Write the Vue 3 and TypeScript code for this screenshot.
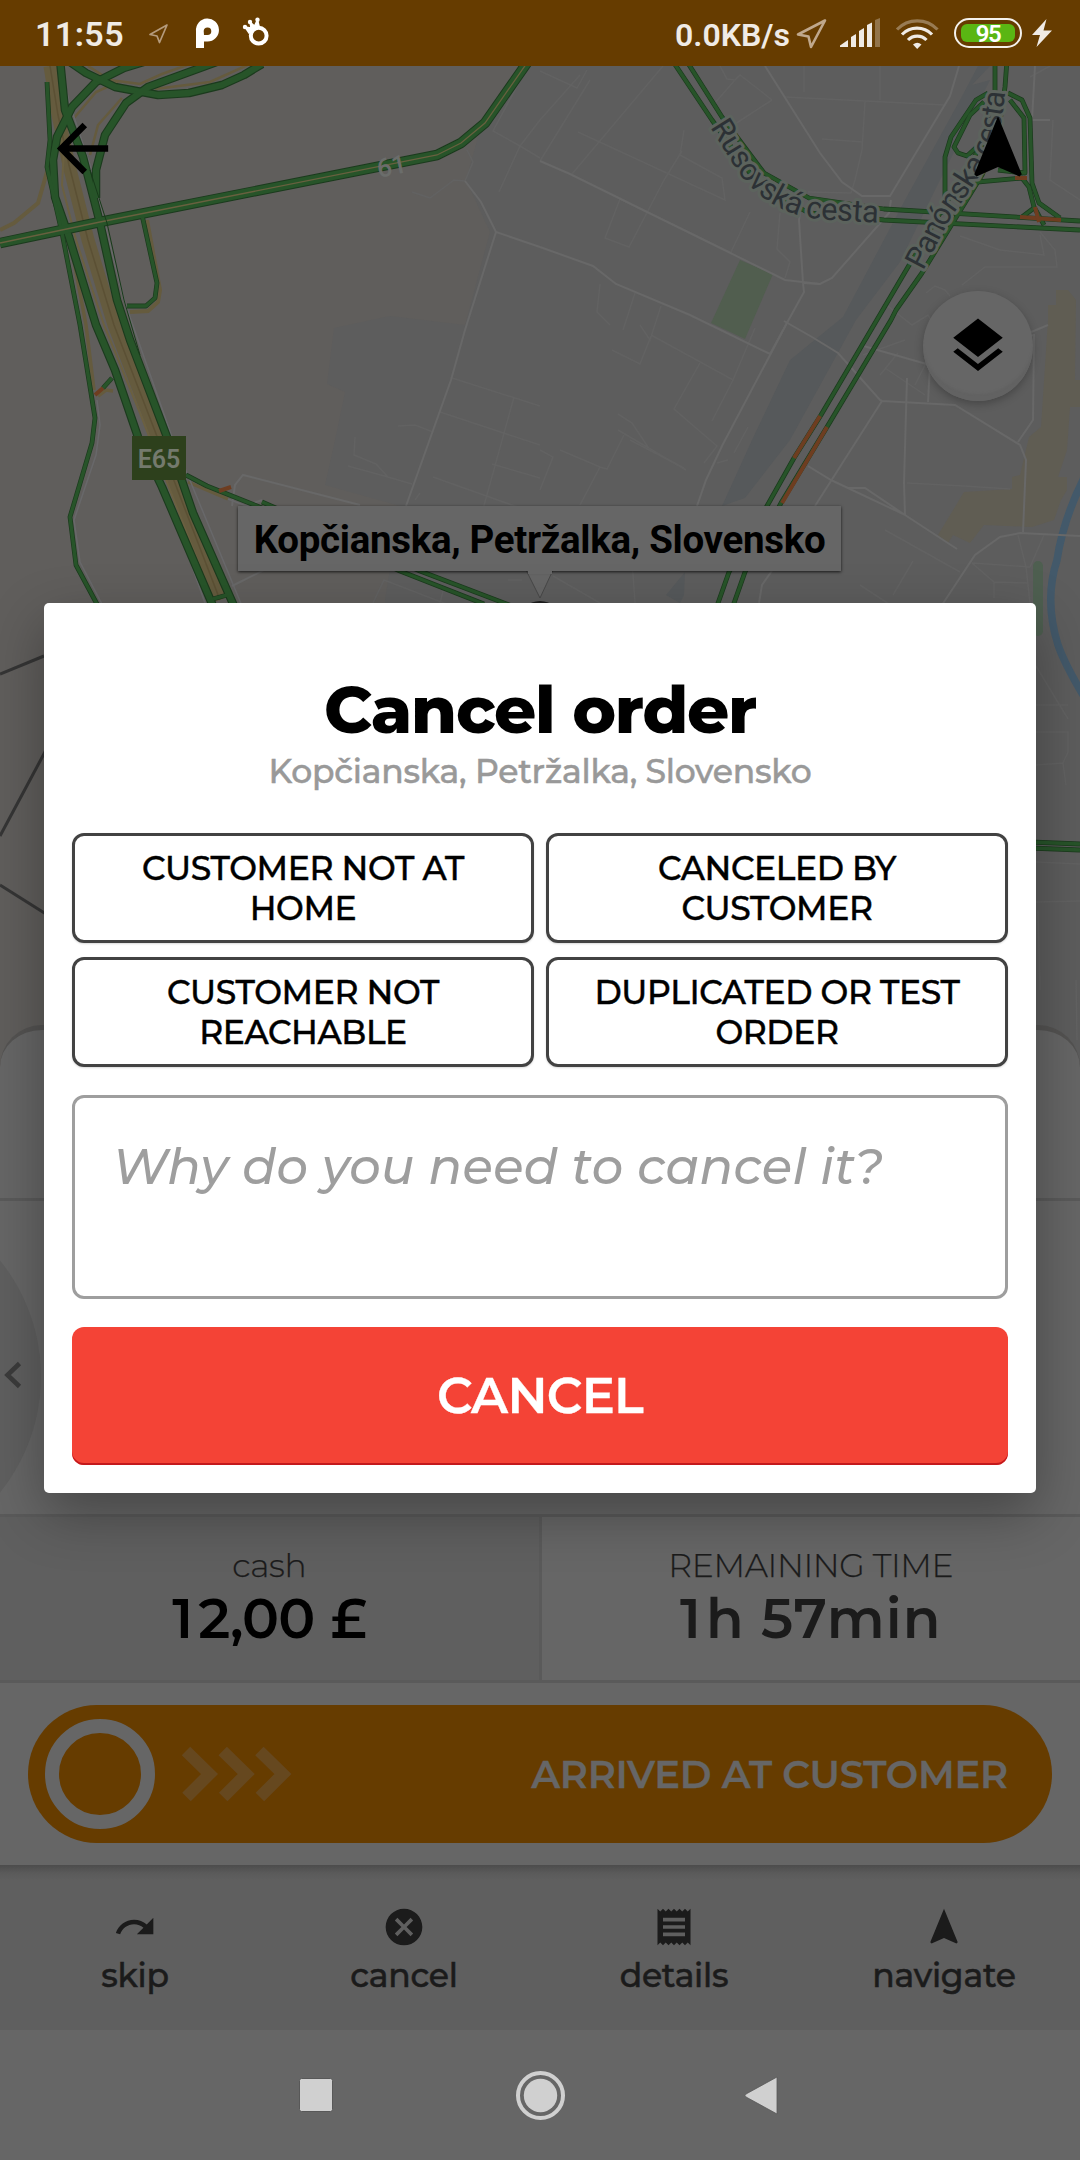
<script setup lang="ts">
interface Action { label: string; icon: string }

const reasons: string[] = [
  'CUSTOMER NOT AT HOME',
  'CANCELED BY CUSTOMER',
  'CUSTOMER NOT REACHABLE',
  'DUPLICATED OR TEST ORDER',
]

const actions: Action[] = [
  { label: 'skip', icon: 'M18.4 10.6C16.55 8.99 14.15 8 11.5 8c-4.65 0-8.58 3.03-9.96 7.22L3.9 16c1.05-3.19 4.05-5.5 7.6-5.5 1.95 0 3.73.72 5.12 1.88L13 16h9V7l-3.6 3.6z' },
  { label: 'cancel', icon: 'M12 2C6.47 2 2 6.47 2 12s4.47 10 10 10 10-4.47 10-10S17.53 2 12 2zm5 13.59L15.59 17 12 13.41 8.41 17 7 15.59 10.59 12 7 8.41 8.41 7 12 10.59 15.59 7 17 8.41 13.41 12 17 15.59z' },
  { label: 'details', icon: 'M18 17H6v-2h12v2zm0-4H6v-2h12v2zm0-4H6V7h12v2zM3 22l1.5-1.5L6 22l1.5-1.5L9 22l1.5-1.5L12 22l1.5-1.5L15 22l1.5-1.5L18 22l1.5-1.5L21 22V2l-1.5 1.5L18 2l-1.5 1.5L15 2l-1.5 1.5L12 2l-1.5 1.5L9 2 7.5 3.5 6 2 4.5 3.5 3 2v20z' },
  { label: 'navigate', icon: 'M12 2L4.5 20.29l.71.71L12 18l6.79 3 .71-.71z' },
]

// Heavily trafficked roads on the motorway side
const wideRoads: string[] = [
  'M60 60L65 110L83 157L100 223L117 300L130 340L148 387L167 437L193 513L234 606',
  'M150 60L124 68L96 82L72 107L57 137L53 160L55 197L69 237L96 325L115 370L138 437L162 487L213 606',
  'M70 62L86 73L115 87L158 95L189 93L222 85L244 75L262 64',
  'M222 60L148 87L126 103L105 135L96 170L96 198',
]

const thinRoads: string[] = [
  'M47 82L50 140L47 167L62 233L80 325L91 393L95 418L92 443L70 517L76 565L98 606',
  'M142 215L157 283L155 298L146 306L127 306',
  'M112 378L103 388',
  'M186 475L207 486L262 508L400 571L484 604',
  'M262 502L420 571L512 606',
  'M213 599L227 595',
  'M672 60L712 120L760 187L809 213L884 220L1080 230',
  'M686 60L722 117L764 173L809 198L884 209L1080 221',
  'M995 60L995 95L985 140L970 163L908 267L821 415L794 458L767 506L729 572L717 606',
  'M1007 60L1005 87L998 135L982 175L922 273L896 310L891 320L827 427L781 503L745 572L733 606',
  'M988 93L976 100L951 137L945 157L945 200',
  'M984 102L970 115L954 147L958 153L967 156L979 145',
  'M1008 93L1022 100L1030 118L1032 183L1039 203L1060 218',
  'M1010 100L1024 118L1025 173L998 170',
  'M977 182L1022 178L1029 187L1034 207L1044 225',
  'M1022 217L1034 208',
  'M1030 842L1080 844',
  'M1030 848L1080 850',
]

const jams: string[] = [
  'M95 395L103 388',
  'M219 491L231 487',
  'M1015 178L1027 178',
  'M1020 217L1061 220',
  'M1035 207L1039 222',
  'M820 416L794 458',
  'M827 427L782 503',
]

const streets: string[] = [
  'M540 247L593 266L616 284L690 315L770 354L788 321L804 292L803 283L799 220L800 212',
  'M765 66L820 153L842 182L862 196L890 196L950 96L959 66',
  'M891 200L889 213L832 278L820 284L803 283',
  'M465 181L481 202L496 232L540 247M496 232L465 330L451 380L406 506',
  'M788 321L722 446L706 480L697 506',
  'M784 321L812 337L838 353L880 400L882 401M815 506L882 401L955 405L1020 445L1026 460L1023 532',
  'M940 608L975 555L1000 537L1020 533L1080 536M759 603L762 585L790 545L815 506',
  'M848 488L865 488L905 515L957 549M808 466L831 480L905 515L904 483L907 378',
  'M540 161L570 174L700 238L785 280L820 284',
  'M985 385L1012 340L1034 335L1033 420L1018 442',
  'M928 402L930 365L860 345M1012 340L1048 325M1035 66L1032 120L1050 120',
  'M232 586L268 568M232 506L235 485L243 475L360 505M262 500L245 506',
]

const lanes: string[] = [
  'M540 71L577 88L587 70M540 120L580 75M572 174L663 66M540 161L590 80M578 132L725 200L722 178L680 155L684 130',
  'M620 199L605 238L629 247L664 180L682 151M731 252L750 212M620 199L732 253M780 213L777 249L790 262L785 278',
  'M720 66L727 79L735 80L740 75L762 92L772 100M735 80L714 104M772 100L735 124M785 97L945 105',
  'M865 102L862 150L855 180L851 193L808 192M822 139L863 142M880 66L880 100M804 66L804 92',
  'M600 284L597 312L610 325M635 293L623 330M661 306L650 340L640 325M651 335L733 380L755 328',
  'M612 350L640 364L651 336M700 363L674 409L717 446L704 463M733 380L712 421M618 414L632 423L650 450M686 470L618 430',
  'M540 450L553 457L540 490M560 450L600 467L607 469L624 435M600 467L580 505M630 440L684 468M748 427L734 453M728 460L717 463',
  'M452 378L540 406M440 412L540 445M514 397L480 520M433 477L540 515M492 464L540 478',
  'M355 437L354 455L376 464L388 477L412 484M348 466L388 477M398 426L415 425L433 432M415 500L420 493',
  'M528 66L493 131L520 146L540 158M540 120L520 146L499 192M467 150L473 162L465 181M465 181L454 180L430 198L412 192',
  'M373 603L384 580L540 640M443 591L440 603M508 580L522 580M553 576L600 603M635 603L632 560',
  'M907 483L964 486L1010 489M885 530L960 572M860 585L895 608M893 595L913 561',
  'M972 563L1030 567M972 563L994 582L1028 583M994 582L994 598M1018 535L1026 567L1030 603M1044 535L1030 567',
  'M1053 120L1050 180L1080 200M1050 66L1030 77M1040 232L1055 250L1057 267L985 267L962 285M1040 235L1044 255L1000 250L960 236',
  'M926 293L935 286L945 290L950 296M884 303L912 325L928 315L940 335L915 385M898 353L880 375M885 368L925 395M863 355L905 340',
  'M1036 666L1068 719M1036 705L1068 705M1036 732L1068 732L1068 752L1063 763L1066 785M1036 765L1063 763M1036 862L1080 864M1036 902L1080 901M1038 910L1040 990M1076 980L1077 1040',
]
</script>

<template>
  <div class="screen">
    <header class="status">
      <span class="clock">11:55</span>
      <svg class="status-left" width="140" height="66" viewBox="140 0 140 66">
        <path d="M167 25L150 34.500L157 36L159.500 42.500Z" fill="none" stroke="#b59b7c" stroke-width="1.700" stroke-linejoin="round" />
        <path d="M196 48V31A11.500 11.500 0 1 1 207.500 41.500H204V48ZM204 35H207.500A3.800 3.800 0 1 0 203.700 31Z" fill="#fff" fill-rule="evenodd" />
        <circle cx="258.700" cy="35.700" r="7.900" fill="none" stroke="#fff" stroke-width="4" />
        <path d="M245 27L249 33L259 26L257.500 20L254.500 26L250 22L251 28Z" fill="#fff" stroke="#fff" stroke-width="1.500" />
        <circle cx="245" cy="27" r="2.200" fill="#fff" /><circle cx="250" cy="22" r="2.200" fill="#fff" /><circle cx="257.500" cy="19.700" r="2.200" fill="#fff" />
      </svg>
      <span class="speed">0.0KB/s</span>
      <svg class="status-mid" width="150" height="66" viewBox="794 0 150 66">
        <path d="M825 20.500L798 34.500L808.500 36.500L811 47Z" fill="none" stroke="#c0a88c" stroke-width="2.600" stroke-linejoin="round" />
        <g fill="#f0ebe5">
          <path d="M840 47V45.500L848 40V47Z" /><path d="M851 47V37L856 34V47Z" /><path d="M859 47V31L864 28V47Z" /><path d="M867 47V25L872 22.500V47Z" />
          <path d="M875 47V20L880 18V47Z" opacity=".32" />
        </g>
        <g fill="none" stroke="#f0ebe5" stroke-width="3.200">
          <path d="M897 29.500A28 28 0 0 1 937.500 29.500" opacity=".36" />
          <path d="M902 34.500A21 21 0 0 1 932 34.500" />
          <path d="M908 40A13 13 0 0 1 926.500 40" />
        </g>
        <path d="M917.200 49L913 44.500Q917.200 41 921.500 44.500Z" fill="#f0ebe5" />
      </svg>
      <div class="battery"><span>95</span></div>
      <svg class="bolt" width="22" height="30" viewBox="0 0 22 30"><path d="M15.500 1L1 17H9L5.500 29L21 12.500H12.500Z" fill="#f0ebe5" /></svg>
    </header>

    <main class="map">
      <svg class="map-canvas" width="1080" height="1014" viewBox="0 66 1080 1014">
        <rect y="66" width="1080" height="1014" fill="#5d5d5d" />
        <path d="M0 66H527L480 130L466 180L490 232L465 325L390 316L334 328L327 384L345 392L335 440L325 485L400 506L385 600V1080H0Z" fill="#605e5c" />
        <path d="M972 85L990 66H978L960 100L905 200L843 317L790 360L752 440L722 506L745 498L790 440L856 320L900 262L935 190L990 80Z" fill="#56595b" />
        <path d="M680 603L666 595L685 572L684 595Z" fill="#56595b" />
        <path d="M740 260L773 274L745 339L711 323Z" fill="#515e4f" />
        <path d="M1056 290H1068L1076 300L1075 380H1080V407H1070L1067 450L1058 477H1067V490L1061 500L1054 520L1032 527L984 525L970 543L953 535L948 543L938 535L964 492L1012 489V477L1020 475L1029 437L1041 427L1048 320V305H1056Z" fill="#605d53" />
        <path d="M1038 566V631" stroke="#4e5f50" stroke-width="10" stroke-linecap="round" />
        <path d="M1084 478Q1063 520 1057 560Q1044 600 1058 645Q1065 665 1086 700" fill="none" stroke="#43596a" stroke-width="7.500" />
        <path v-for="d in lanes" :key="d" :d="d" class="lane" />
        <path v-for="d in streets" :key="d" :d="d" class="street" />

        <g fill="none">
          <path d="M50 66L58 115L69 165L88 240L114 325L148 413L220 600" stroke="#655b3e" stroke-width="13" />
          <path d="M50 66L58 115L69 165L88 240L114 325L148 413L220 600" stroke="#5b5034" stroke-width="1.500" />
          <path d="M64 150L62 185L76 240L104 325L140 413L213 600" stroke="#6b6040" stroke-width="2" />
          <path d="M0 230L14 223L38 203L49 165" stroke="#655b3e" stroke-width="4" />
          <path d="M147 220L160 290L158 302L148 311L130 312" stroke="#655b3e" stroke-width="4" />
          <path d="M70 240L86 325L94 390M98 396L106 390L113 391M188 482L228 499" stroke="#655b3e" stroke-width="3.500" />
          <path d="M88 66L110 80L140 84L162 74L190 64M155 89L210 82L250 64M74 118L96 92L118 82M90 155L98 125L122 98" stroke="#655b3e" stroke-width="2.500" />
          <path d="M97 400L100 425L96 455L74 520L80 562L103 606M60 66L70 105L90 165L124 300L172 437L242 606M165 490L206 606M228 499L262 512" stroke="#68686a" stroke-width="1.500" />
          <path d="M0 674L44 656M0 836L46 750M0 885L46 914" stroke="#353535" stroke-width="3" />
        </g>

        <g class="casing">
          <path v-for="d in wideRoads" :key="d" :d="d" stroke-width="8.500" />
          <path v-for="d in thinRoads" :key="d" :d="d" stroke-width="4.800" />
          <path d="M0 243L100 222L437 155L461 143L485 123L529 60" stroke-width="10.500" />
        </g>
        <g class="flow">
          <path v-for="d in wideRoads" :key="d" :d="d" stroke-width="6.300" />
          <path v-for="d in thinRoads" :key="d" :d="d" stroke-width="3.400" />
          <path d="M0 243L100 222L437 155L461 143L485 123L529 60" stroke-width="8.600" />
        </g>
        <path d="M0 243L100 222L437 155L461 143L485 123L529 60" fill="none" stroke="#68603f" stroke-width="1.300" />
        <path d="M90 170L107 223L124 300L140 355" fill="none" stroke="#173a19" stroke-width="1" />
        <path v-for="d in jams" :key="d" :d="d" fill="none" stroke="#6e3d20" stroke-width="4" />

        <path id="rusovska" d="M710 127L736 169Q758 201 792 213Q808 219 830 220L900 224" fill="none" />
        <path id="panonska" d="M923 271L951 217Q986 170 995 145Q1004 120 1007 70" fill="none" />
        <text class="road"><textPath href="#rusovska" textLength="209">Rusovská cesta</textPath></text>
        <text class="road"><textPath href="#panonska" textLength="200">Panónska cesta</textPath></text>
        <text class="route" transform="translate(379 178) rotate(-12)">61</text>
        <rect x="132" y="436" width="54" height="44" fill="#2d401c" />
        <text x="159" y="467.500" class="shield">E65</text>

        <circle cx="540" cy="622" r="21" fill="#1d1d1d" />
        <path d="M526 570L540 598L553 570Z" fill="#666" stroke="#484848" />
      </svg>

      <svg class="back" width="77" height="77" viewBox="0 0 24 24"><path d="M20 11H7.830l5.590-5.590L12 4l-8 8 8 8 1.410-1.410L7.830 13H20v-2z" /></svg>
      <svg class="compass" width="76" height="76" viewBox="0 0 24 24"><path d="M12 2L4.500 20.290l.71.71L12 18l6.790 3 .71-.71z" /></svg>
      <div class="layers">
        <svg width="66" height="66" viewBox="0 0 24 24"><path d="M11.990 18.540l-7.370-5.730L3 14.070l9 7 9-7-1.630-1.270-7.380 5.740zM12 16l7.360-5.730L21 9l-9-7-9 7 1.630 1.270L12 16z" /></svg>
      </div>
      <div class="callout">Kopčianska, Petržalka, Slovensko</div>
      <i class="callout-joint"></i>
    </main>

    <section class="sheet">
      <div class="sheet-head"></div>
      <div class="sheet-body">
        <div class="drawer"><svg width="24" height="30" viewBox="0 0 24 30"><path d="M19.500 3.500L7.500 15L19.500 26.500" fill="none" stroke="#3b3b3b" stroke-width="4.600" /></svg></div>
      </div>
      <div class="stats">
        <div class="stat cash"><span class="stat-label">cash</span><span class="stat-value"><span class="lead">1</span>2,00 £</span></div>
        <div class="stat time"><span class="stat-label">REMAINING TIME</span><span class="stat-value"><span class="lead">1</span>h 57min</span></div>
      </div>
      <div class="slider">
        <div class="track">
          <div class="knob"></div>
          <svg class="chevrons" width="112" height="58" viewBox="0 0 112 58">
            <path v-for="n in 3" :key="n" :d="`M${5 + (n - 1) * 36.7} 6L${28.500 + (n - 1) * 36.700} 29L${5.500 + (n - 1) * 36.700} 52`" fill="none" stroke="#66481f" stroke-width="12" />
          </svg>
          <span>ARRIVED AT CUSTOMER</span>
        </div>
      </div>
    </section>

    <nav class="actions">
      <div v-for="a in actions" :key="a.label" class="action">
        <svg width="44" height="44" viewBox="0 0 24 24"><path :d="a.icon" fill="#1b1b1b" /></svg>
        <span>{{ a.label }}</span>
      </div>
    </nav>

    <footer class="system">
      <svg width="1080" height="130" viewBox="0 2030 1080 130" fill="#d0d0d0">
        <rect x="299.500" y="2078.500" width="33" height="33" rx="2" stroke="#585858" />
        <circle cx="540.500" cy="2095.500" r="22.500" fill="none" stroke="#d0d0d0" stroke-width="4" />
        <circle cx="540.500" cy="2095.500" r="16.700" />
        <path d="M777 2077V2114L746 2097Q744 2095.500 746 2094Z" stroke="#585858" stroke-width=".8" />
      </svg>
    </footer>

    <div class="dialog">
      <h1>Cancel order</h1>
      <p class="address">Kopčianska, Petržalka, Slovensko</p>
      <div class="reasons">
        <button v-for="r in reasons" :key="r" type="button">{{ r }}</button>
      </div>
      <div class="note">Why do you need to cancel it?</div>
      <button class="confirm" type="button">CANCEL</button>
    </div>
  </div>
</template>

<style>
body { margin: 0; background: #666; }
</style>

<style scoped>
.screen { position: relative; width: 1080px; height: 2160px; overflow: hidden; display: flex; flex-direction: column; background: #666; font-family: Montserrat, Inter, sans-serif; }
.screen * { box-sizing: border-box; }
svg { display: block; flex: none; }

.status { height: 66px; flex: none; display: flex; align-items: center; background: #663c00; color: #f0ebe5; font-family: Roboto, sans-serif; }
.clock { width: 105px; margin-left: 35px; font-size: 34px; font-weight: 600; letter-spacing: .4px; line-height: 66px; padding-top: 2px; }
.speed { width: 119px; margin-left: 395px; font-size: 32px; font-weight: 600; line-height: 66px; padding-top: 3px; white-space: nowrap; }
.battery { width: 68px; height: 30px; margin-left: 10px; padding: 3.500px 5px; border: 2.500px solid #f4f1ec; border-radius: 15px; }
.battery span { display: block; height: 18px; border-radius: 6px; background: #5ab613; color: #fff; font-size: 24px; font-weight: 600; line-height: 20px; text-align: center; letter-spacing: -1.500px; }
.bolt { margin-left: 9px; }

.map { position: relative; height: 1014px; flex: none; }
.lane { fill: none; stroke: #626262; stroke-width: 1.500; }
.street { fill: none; stroke: #686868; stroke-width: 2; }
.casing { fill: none; stroke: #1b3a1d; stroke-linejoin: round; }
.flow { fill: none; stroke: #275429; stroke-linejoin: round; }
.road { font: 400 31px Roboto, sans-serif; fill: #2c3135; stroke: #5c635d; stroke-width: 6px; paint-order: stroke; stroke-linejoin: round; }
.route { font: 500 26px Roboto, sans-serif; fill: #6b6d6b; }
.shield { font: 600 25px Roboto, sans-serif; fill: #747a6d; text-anchor: middle; }
.back { position: absolute; left: 43.500px; top: 44px; }
.compass { position: absolute; left: 959.500px; top: 44px; }
.layers { position: absolute; left: 923px; top: 225px; width: 110px; height: 110px; display: flex; align-items: center; justify-content: center; border-radius: 50%; background: #666; box-shadow: inset 0 -8px 2px -1px #626262, 0 3px 9px rgba(0, 0, 0, .25); }
.callout { position: absolute; left: 238px; top: 440px; width: 603px; height: 65px; background: #666; box-shadow: 0 1px 3px rgba(0, 0, 0, .75); color: #000; font: 700 38.500px/67px Roboto, sans-serif; letter-spacing: -.32px; text-align: center; white-space: nowrap; }
.callout-joint { position: absolute; left: 528px; top: 503px; width: 24px; height: 5px; background: #666; }

.sheet { position: relative; margin-top: -55px; flex: none; display: flex; flex-direction: column; background: #666; border-top: 5px solid #545352; border-radius: 42px 42px 0 0; }
.sheet-head { height: 171px; border-bottom: 3px solid #5a5a5a; }
.sheet-body { height: 316px; border-bottom: 3px solid #5a5a5a; position: relative; overflow: hidden; }
.drawer { position: absolute; left: -328px; top: -9px; width: 369px; height: 369px; border-radius: 50%; background: #5f5f5f; display: flex; align-items: center; justify-content: flex-end; padding: 0 17px 3px 0; }
.stats { height: 166px; display: flex; border-bottom: 3px solid #5a5a5a; }
.stat { flex: 1; display: flex; flex-direction: column; align-items: center; padding-top: 28px; color: #1b1b1b; }
.cash { background: #5f5f5f; border-right: 3px solid #5a5a5a; }
.cash .stat-value { color: #000; letter-spacing: -.8px; word-spacing: 2px; }
.time .stat-value { letter-spacing: 1.100px; }
.stat-label { font-size: 33px; font-weight: 300; line-height: 40px; letter-spacing: -.35px; color: #1b1b1b; -webkit-text-stroke: .25px #1b1b1b; }
.stat-value { margin-top: 4px; font-size: 55px; font-weight: 600; line-height: 60px; white-space: nowrap; }
.stat-value .lead { letter-spacing: 5px; }
.slider { height: 182px; padding: 22px 28px; }
.track { height: 138px; display: flex; align-items: center; padding: 0 44px 0 17px; border-radius: 69px; background: #663c00; color: #666; font-size: 38.500px; font-weight: 600; letter-spacing: -.25px; white-space: nowrap; -webkit-text-stroke: .3px #666; }
.knob { width: 110px; height: 110px; flex: none; border: 14px solid #666; border-radius: 50%; }
.chevrons { margin: 0 auto 0 26px; }

.actions { height: 165px; flex: none; display: flex; background: linear-gradient(#4c4c4c, #5a5a5a 8px, #5f5f5f 15px); }
.action { flex: 1; display: flex; flex-direction: column; align-items: center; gap: 6px; padding-top: 40px; color: #1b1b1b; font-size: 33px; font-weight: 500; line-height: 40px; letter-spacing: -.25px; -webkit-text-stroke: .5px #1b1b1b; }
.action:nth-child(n + 2) { position: relative; left: -1px; }
.system { height: 130px; flex: none; background: #666; }

.dialog { position: absolute; left: 44px; top: 603px; width: 992px; height: 890px; display: flex; flex-direction: column; padding: 67px 28px 28px; border-radius: 5px; background: #fff; box-shadow: 0 20px 56px rgba(0, 0, 0, .32); }
h1 { margin: 0; font-size: 66px; font-weight: 800; line-height: 80px; text-align: center; color: #000; letter-spacing: -1.350px; }
.address { margin: 1px 0 42px; font-size: 33px; font-weight: 500; line-height: 40px; text-align: center; color: #999; letter-spacing: -.22px; -webkit-text-stroke: .5px #999; }
.reasons { display: grid; grid-template-columns: 462px 462px; gap: 14px 12px; }
.reasons button { height: 110px; padding: 0 40px; border: 3px solid #424242; border-radius: 12px; background: #fff; color: #000; font: 500 33px/40px Montserrat, Inter, sans-serif; letter-spacing: -.38px; -webkit-text-stroke: .45px #000; box-shadow: 0 1px 2px rgba(0, 0, 0, .15); }
.note { height: 204px; margin-top: 28px; padding: 38px; border: 3px solid #9e9e9e; border-radius: 12px; color: #9e9e9e; font-size: 49.500px; font-style: italic; font-weight: 500; line-height: 60px; letter-spacing: .36px; white-space: nowrap; }
.confirm { height: 138px; margin-top: 28px; padding: 0 0 3px; border: 0; border-radius: 12px; background: #f44336; box-shadow: inset 0 -2px 0 #c3191c; color: #fff; font: 600 49.500px/60px Montserrat, Inter, sans-serif; letter-spacing: -.7px; -webkit-text-stroke: .3px #fff; }
</style>
